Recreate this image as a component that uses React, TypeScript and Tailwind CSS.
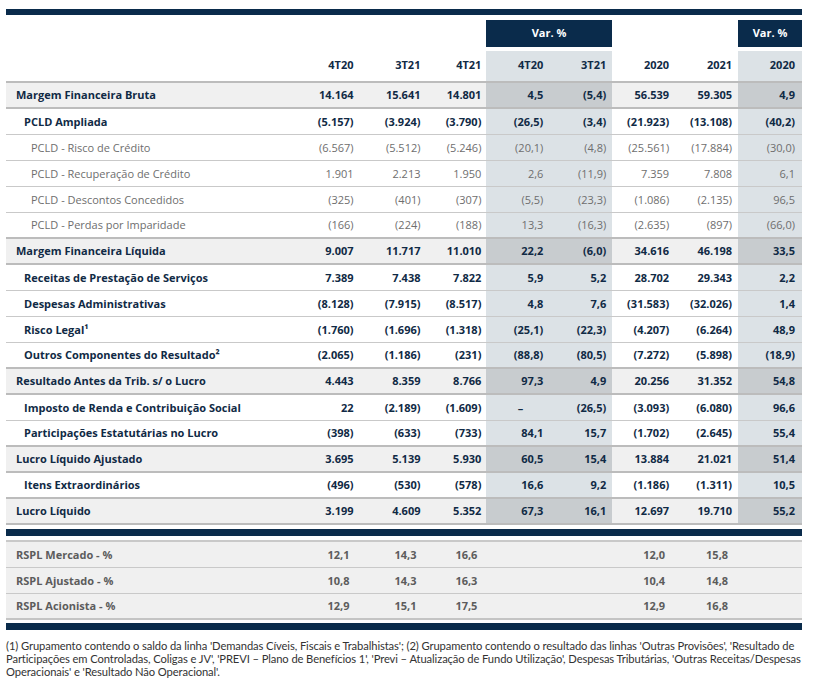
type Kind = "hl" | "b" | "g";

type Row = { label: string; kind: Kind; values: string[] };

const rows: Row[] = [
  { label: "Margem Financeira Bruta", kind: "hl", values: ["14.164", "15.641", "14.801", "4,5", "(5,4)", "56.539", "59.305", "4,9"] },
  { label: "PCLD Ampliada", kind: "b", values: ["(5.157)", "(3.924)", "(3.790)", "(26,5)", "(3,4)", "(21.923)", "(13.108)", "(40,2)"] },
  { label: "PCLD - Risco de Crédito", kind: "g", values: ["(6.567)", "(5.512)", "(5.246)", "(20,1)", "(4,8)", "(25.561)", "(17.884)", "(30,0)"] },
  { label: "PCLD - Recuperação de Crédito", kind: "g", values: ["1.901", "2.213", "1.950", "2,6", "(11,9)", "7.359", "7.808", "6,1"] },
  { label: "PCLD - Descontos Concedidos", kind: "g", values: ["(325)", "(401)", "(307)", "(5,5)", "(23,3)", "(1.086)", "(2.135)", "96,5"] },
  { label: "PCLD - Perdas por Imparidade", kind: "g", values: ["(166)", "(224)", "(188)", "13,3", "(16,3)", "(2.635)", "(897)", "(66,0)"] },
  { label: "Margem Financeira Líquida", kind: "hl", values: ["9.007", "11.717", "11.010", "22,2", "(6,0)", "34.616", "46.198", "33,5"] },
  { label: "Receitas de Prestação de Serviços", kind: "b", values: ["7.389", "7.438", "7.822", "5,9", "5,2", "28.702", "29.343", "2,2"] },
  { label: "Despesas Administrativas", kind: "b", values: ["(8.128)", "(7.915)", "(8.517)", "4,8", "7,6", "(31.583)", "(32.026)", "1,4"] },
  { label: "Risco Legal¹", kind: "b", values: ["(1.760)", "(1.696)", "(1.318)", "(25,1)", "(22,3)", "(4.207)", "(6.264)", "48,9"] },
  { label: "Outros Componentes do Resultado²", kind: "b", values: ["(2.065)", "(1.186)", "(231)", "(88,8)", "(80,5)", "(7.272)", "(5.898)", "(18,9)"] },
  { label: "Resultado Antes da Trib. s/ o Lucro", kind: "hl", values: ["4.443", "8.359", "8.766", "97,3", "4,9", "20.256", "31.352", "54,8"] },
  { label: "Imposto de Renda e Contribuição Social", kind: "b", values: ["22", "(2.189)", "(1.609)", "–", "(26,5)", "(3.093)", "(6.080)", "96,6"] },
  { label: "Participações Estatutárias no Lucro", kind: "b", values: ["(398)", "(633)", "(733)", "84,1", "15,7", "(1.702)", "(2.645)", "55,4"] },
  { label: "Lucro Líquido Ajustado", kind: "hl", values: ["3.695", "5.139", "5.930", "60,5", "15,4", "13.884", "21.021", "51,4"] },
  { label: "Itens Extraordinários", kind: "b", values: ["(496)", "(530)", "(578)", "16,6", "9,2", "(1.186)", "(1.311)", "10,5"] },
  { label: "Lucro Líquido", kind: "hl", values: ["3.199", "4.609", "5.352", "67,3", "16,1", "12.697", "19.710", "55,2"] },
];

const cols = [
  { cls: "w-[63px] pr-[7px]", shade: false },
  { cls: "w-[63px] pr-[3px]", shade: false },
  { cls: "w-[63px] pr-[5px]", shade: false },
  { cls: "w-[63px] pr-[6px]", shade: true },
  { cls: "w-[63px] pr-[6px]", shade: true },
  { cls: "w-[63px] pr-[6px]", shade: false },
  { cls: "w-[63px] pr-[6px]", shade: false },
  { cls: "w-[64px] pr-[7px]", shade: true },
];

const headers = ["4T20", "3T21", "4T21", "4T20", "3T21", "2020", "2021", "2020"];

const rspl = [
  { label: "RSPL Mercado - %", values: ["12,1", "14,3", "16,6", "", "", "12,0", "15,8", ""] },
  { label: "RSPL Ajustado - %", values: ["10,8", "14,3", "16,3", "", "", "10,4", "14,8", ""] },
  { label: "RSPL Acionista - %", values: ["12,9", "15,1", "17,5", "", "", "12,9", "16,8", ""] },
];

function DataRow({ row, thick }: { row: Row; thick: boolean }) {
  const hl = row.kind === "hl";
  const labelCls =
    row.kind === "hl"
      ? "pl-[10px] font-bold text-[#102a45]"
      : row.kind === "b"
        ? "pl-[18px] font-bold text-[#102a45]"
        : "pl-[25px] font-normal text-[#6e6e6e]";
  const valCls = row.kind === "g" ? "font-normal text-[#6e6e6e]" : "font-bold text-[#102a45]";

  return (
    <div
      className={`flex h-[26px] ${hl ? "bg-[#f0f0f0]" : "bg-white"} ${
        thick ? "border-b-2 border-[#bcbcbc]" : "border-b border-[#c9c9c9]"
      }`}
    >
      <div className={`flex w-[292px] items-center pt-[1px] ${labelCls}`}>{row.label}</div>
      {cols.map((c, i) => (
        <div
          key={i}
          className={`flex items-center justify-end pt-[1px] ${c.cls} ${valCls} ${
            c.shade ? (hl ? "bg-[#c8cccf]" : "bg-[#dce2e6]") : ""
          }`}
        >
          {row.values[i] === "–" ? <span className="mr-[20px]">–</span> : row.values[i]}
        </div>
      ))}
    </div>
  );
}

export default function App() {
  return (
    <div className="h-[699px] w-[813px] bg-white pt-[9px] font-['Open_Sans',sans-serif] text-[11px]">
      <div className="ml-[6px] w-[796px]">
        <div className="h-[6px] bg-[#0a2b4b]" />

        <div className="mt-[5px] flex h-[27px]">
          <div className="w-[480px]" />
          <div className="flex w-[126px] items-center justify-center bg-[#0a2b4b] font-bold text-white">Var. %</div>
          <div className="w-[126px]" />
          <div className="flex w-[64px] items-center justify-center bg-[#0a2b4b] font-bold text-white">Var. %</div>
        </div>

        <div className="mt-[4px] flex h-[32px] border-b-2 border-[#bcbcbc]">
          <div className="w-[292px]" />
          {cols.map((c, i) => (
            <div
              key={i}
              className={`flex items-center justify-end pb-[2px] font-bold text-[#102a45] ${c.cls} ${c.shade ? "bg-[#dce2e6]" : ""}`}
            >
              {headers[i]}
            </div>
          ))}
        </div>

        {rows.map((r, i) => (
          <DataRow key={r.label} row={r} thick={r.kind === "hl" || rows[i + 1]?.kind === "hl"} />
        ))}

        <div className="mt-[4px] h-[7px] bg-[#0a2b4b]" />

        <div className="mt-[4px] border-t-2 border-[#c9c9c9] bg-[#f0f0f0]">
          {rspl.map((r, i) => (
            <div
              key={r.label}
              className={`flex h-[26px] ${
                i === rspl.length - 1 ? "border-b-2 border-[#c4c4c4]" : "border-b border-[#c9c9c9]"
              } font-bold text-[#5c5c5c]`}
            >
              <div className="flex w-[292px] items-center pl-[10px] pt-[1px]">{r.label}</div>
              {cols.map((c, j) => (
                <div key={j} className={`flex items-center justify-end pt-[1px] ${c.cls}`}>
                  <span className="mr-[4px]">{r.values[j]}</span>
                </div>
              ))}
            </div>
          ))}
        </div>

        <div className="mt-[3px] h-[7px] bg-[#0a2b4b]" />

        <p className="mt-[9px] whitespace-nowrap font-['Lato',sans-serif] text-[11.2px] leading-[13px] tracking-[-0.1px] text-[#333333]">
          (1) Grupamento contendo o saldo da linha 'Demandas Cíveis, Fiscais e Trabalhistas'; (2) Grupamento contendo o resultado das linhas 'Outras Provisões', 'Resultado de
          <br />
          Participações em Controladas, Coligas e JV', 'PREVI – Plano de Benefícios 1', 'Previ – Atualização de Fundo Utilização', Despesas Tributárias, 'Outras Receitas/Despesas
          <br />
          Operacionais' e 'Resultado Não Operacional'.
        </p>
      </div>
    </div>
  );
}
